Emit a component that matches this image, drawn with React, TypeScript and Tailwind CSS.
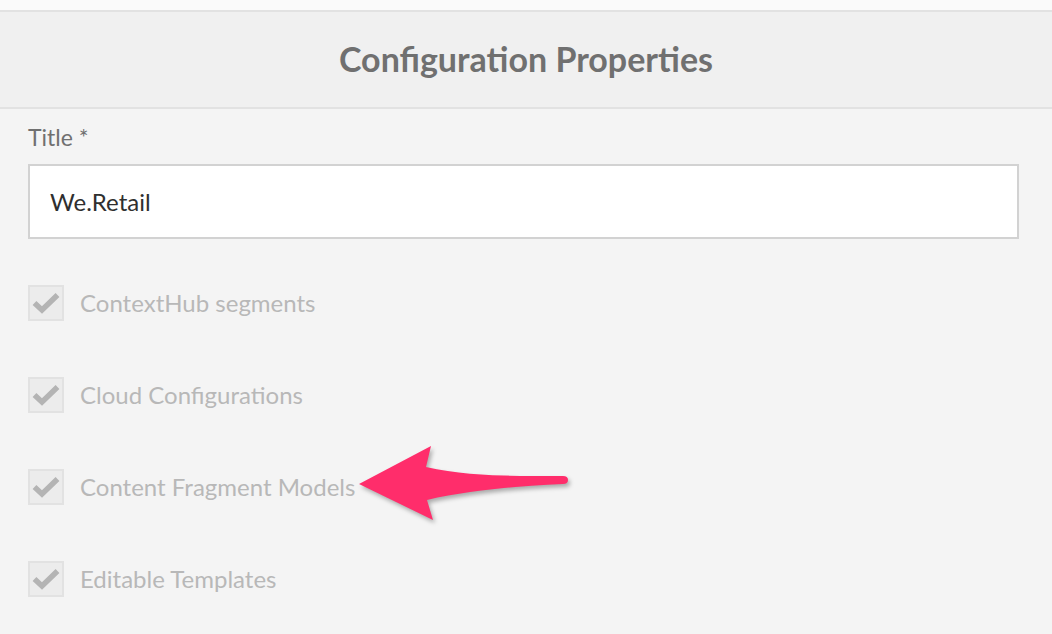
import React from "react";

const items = [
  "ContextHub segments",
  "Cloud Configurations",
  "Content Fragment Models",
  "Editable Templates",
];

const CheckIcon = () => (
  <svg width="28" height="22" viewBox="0 0 28 22" fill="none">
    <path
      d="M2.5 11 L10 18 L25.5 3"
      stroke="#b4b4b4"
      strokeWidth="5.5"
      strokeLinecap="butt"
      strokeLinejoin="miter"
    />
  </svg>
);

const App = () => {
  return (
    <div
      className="relative w-[1052px] h-[634px] overflow-hidden bg-[#f4f4f4]"
      style={{ fontFamily: "Lato, 'Liberation Sans', sans-serif" }}
    >
      <div className="h-[10px] bg-[#fafafa] border-b-2 border-[#e2e2e2] box-content"></div>
      <div className="h-[95px] bg-[#f0f0f0] border-b-2 border-[#e2e2e2] box-content flex items-center justify-center">
        <h1 className="text-[34px] font-bold text-[#707070] pb-[2px]">
          Configuration Properties
        </h1>
      </div>

      <div className="pl-[28px] pr-[33px]">
        <div className="pt-[11px] h-[55px] text-[23px] text-[#707070]">Title *</div>
        <div className="h-[75px] bg-white border-2 border-[#d2d2d2] flex items-center pl-[20px] text-[24px] text-[#2f2f2f]">
          We.Retail
        </div>

        <div className="pt-[46px] flex flex-col gap-[56px]">
          {items.map((label) => (
            <div key={label} className="flex items-center h-[36px]">
              <div className="w-[36px] h-[36px] border-2 border-[#e2e2e2] bg-[#ececec] flex items-center justify-center">
                <CheckIcon />
              </div>
              <span className="ml-[16px] text-[24px] text-[#b8b8b8]">{label}</span>
            </div>
          ))}
        </div>
      </div>

      {/* pink annotation arrow */}
      <svg
        className="absolute left-0 top-0 pointer-events-none"
        width="1052"
        height="634"
        style={{ filter: "drop-shadow(2px 3px 2px rgba(0,0,0,0.3))" }}
      >
        <path
          d="M359 484 L431 446 L426 467 C 470 477 520 476 563 476 Q 568 476 568 480 Q 568 484 563 484 C 520 486 470 490 427 500 L 433 520 Z"
          fill="#ff2d6b"
        />
      </svg>
    </div>
  );
};

export default App;
